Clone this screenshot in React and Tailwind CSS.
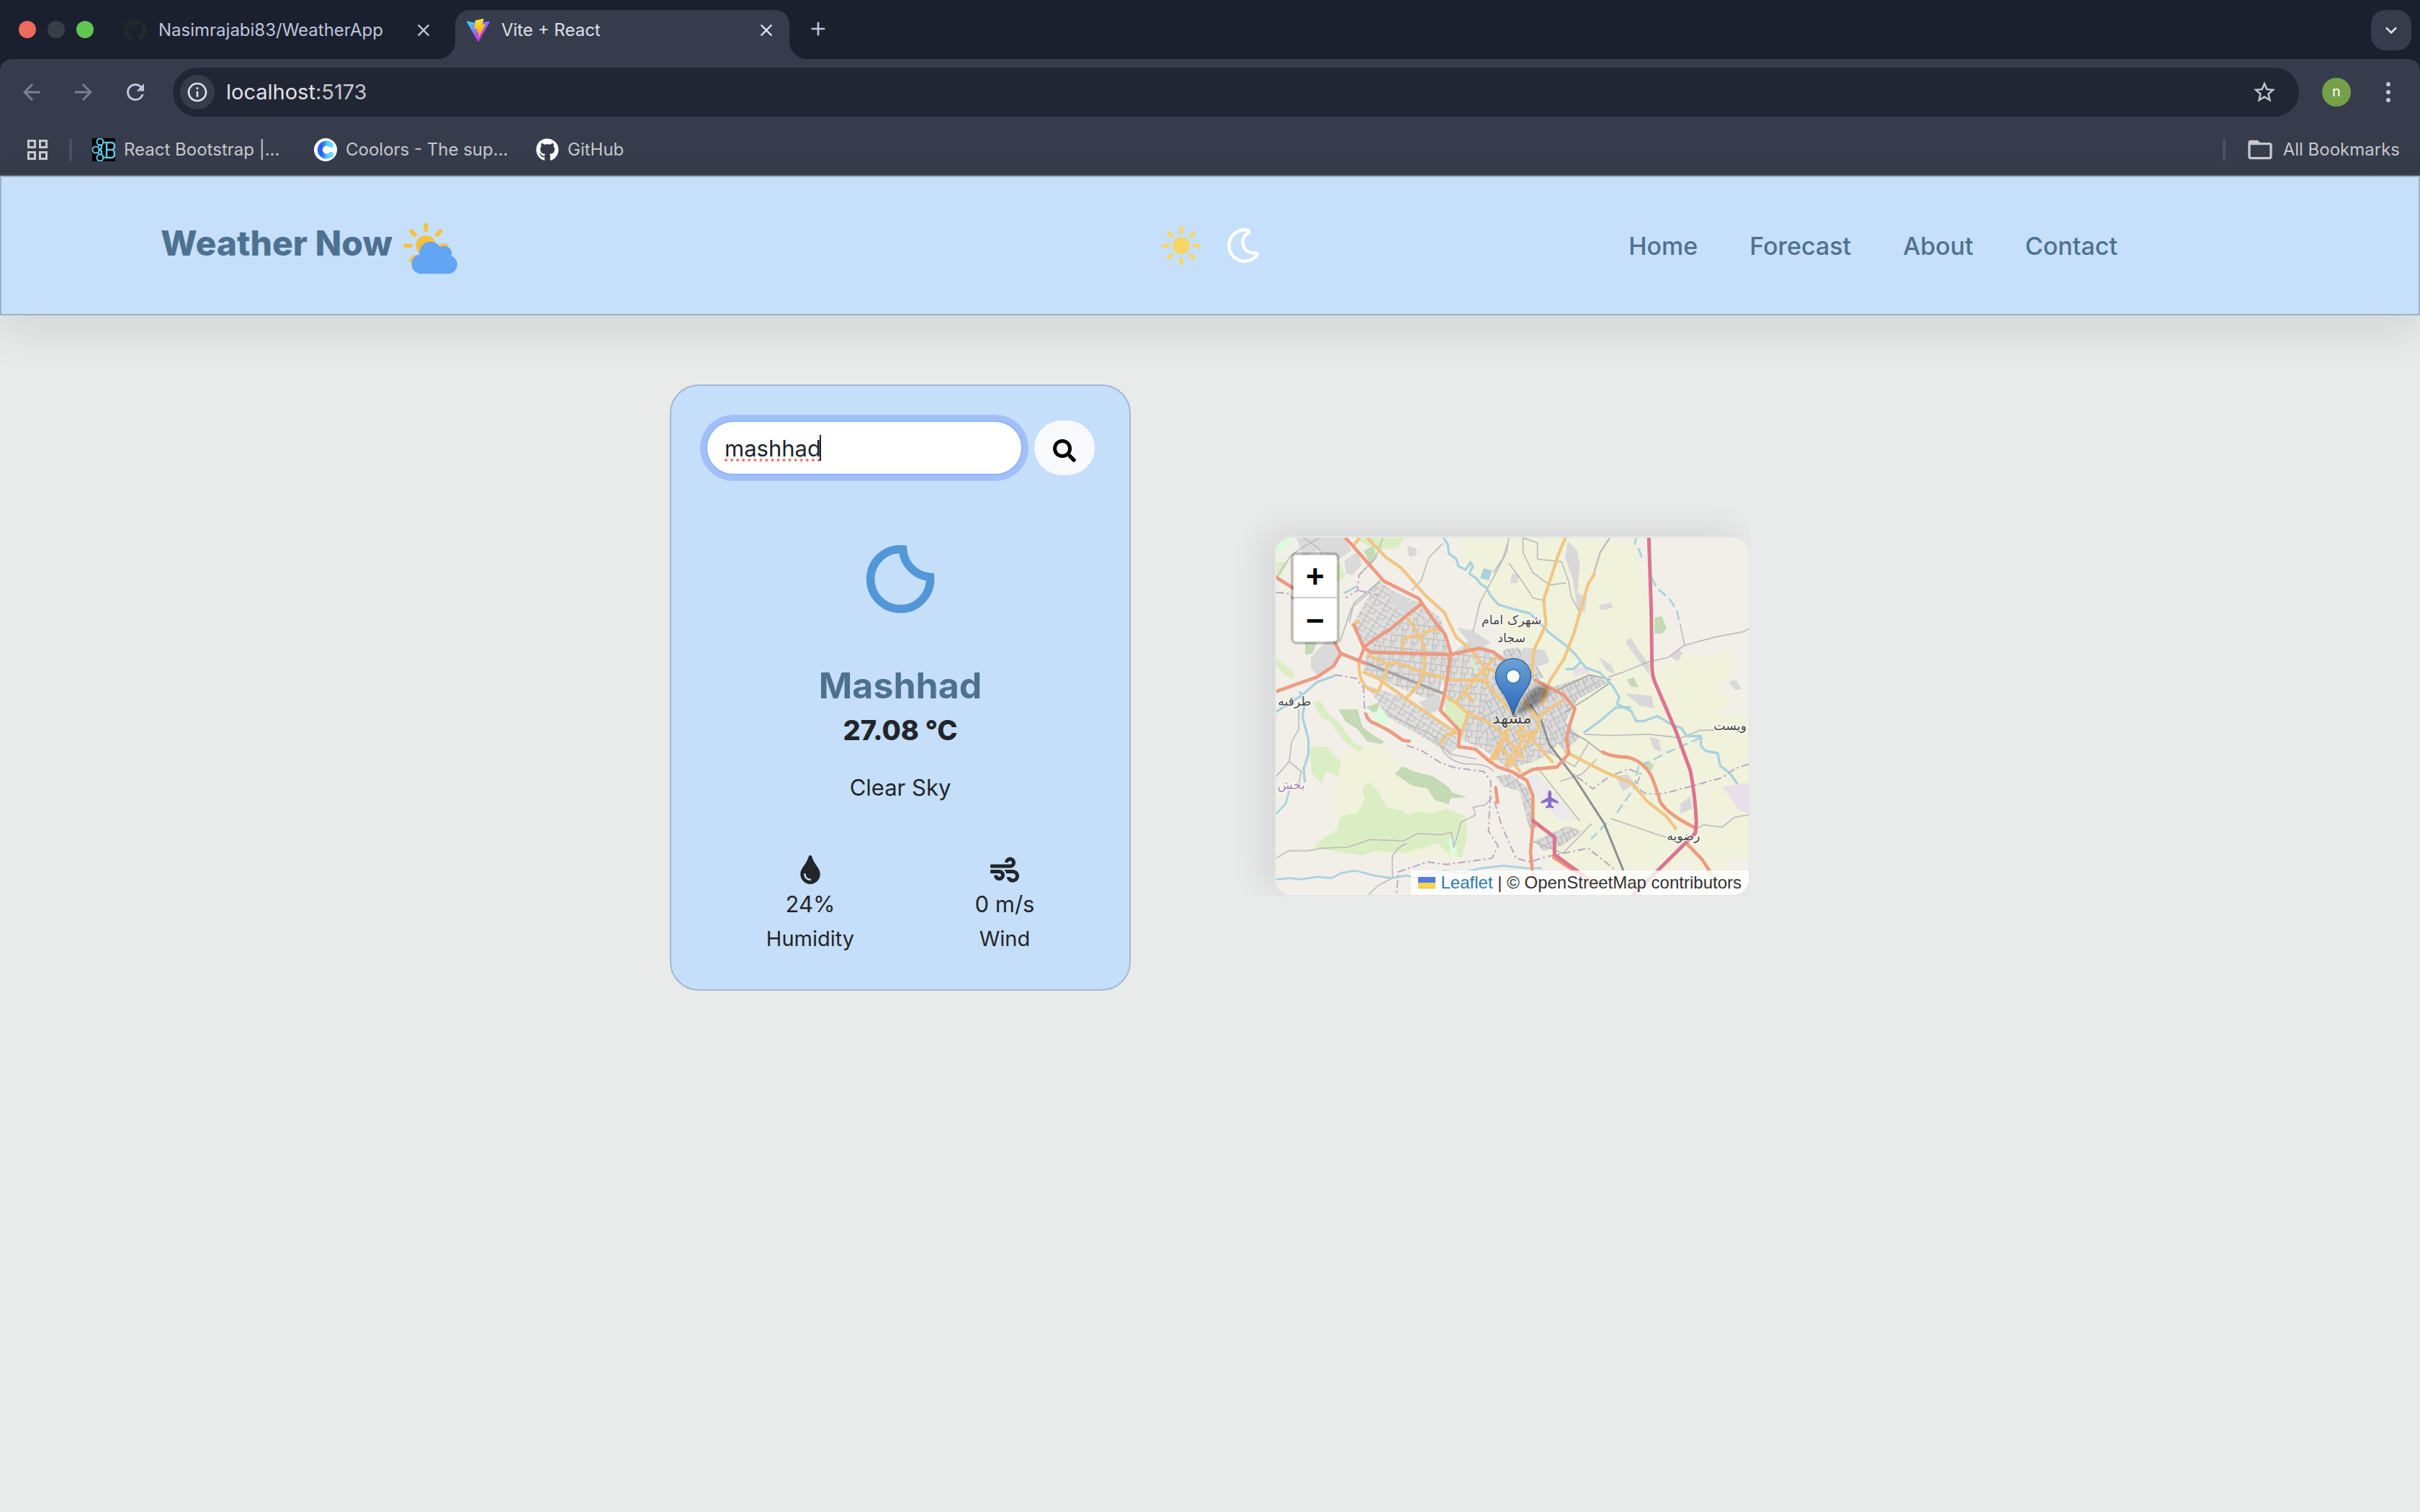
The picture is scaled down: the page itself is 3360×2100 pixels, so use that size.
import React from "react";
import { FaGithub, FaRegMoon, FaSearch, FaTint, FaWind } from "react-icons/fa";
import { IoSunny } from "react-icons/io5";
import {
  MdAdd,
  MdArrowBack,
  MdArrowForward,
  MdClose,
  MdFolderOpen,
  MdInfoOutline,
  MdKeyboardArrowDown,
  MdRefresh,
  MdStarBorder,
} from "react-icons/md";

function ViteLogo() {
  return (
    <svg viewBox="0 0 256 257" className="size-8 shrink-0" aria-hidden="true">
      <defs>
        <linearGradient id="viteBody" x1="-.8%" x2="57.6%" y1="7.7%" y2="78.4%">
          <stop offset="0%" stopColor="#41D1FF" />
          <stop offset="100%" stopColor="#BD34FE" />
        </linearGradient>
        <linearGradient id="viteBolt" x1="43.4%" x2="50.3%" y1="2.2%" y2="89%">
          <stop offset="0%" stopColor="#FFEA83" />
          <stop offset="8.3%" stopColor="#FFDD35" />
          <stop offset="100%" stopColor="#FFA800" />
        </linearGradient>
      </defs>
      <path
        fill="url(#viteBody)"
        d="M255.153 37.938L134.897 252.976c-2.483 4.44-8.862 4.466-11.382.048L.875 37.958c-2.746-4.814 1.371-10.646 6.827-9.67l120.385 21.517a6.537 6.537 0 0 0 2.322-.004l117.867-21.483c5.438-.991 9.574 4.796 6.877 9.62Z"
      />
      <path
        fill="url(#viteBolt)"
        d="M185.432.063L96.44 17.501a3.268 3.268 0 0 0-2.634 3.014l-5.474 92.456a3.268 3.268 0 0 0 3.997 3.378l24.777-5.718c2.318-.535 4.413 1.507 3.936 3.838l-7.361 36.047c-.495 2.426 1.782 4.5 4.151 3.78l15.304-4.649c2.372-.72 4.652 1.36 4.15 3.788l-11.698 56.621c-.732 3.542 3.979 5.473 5.943 2.437l1.313-2.028l72.516-144.72c1.215-2.423-.88-5.186-3.54-4.672l-25.505 4.922c-2.396.462-4.435-1.77-3.759-4.114l16.646-57.705c.677-2.35-1.37-4.583-3.769-4.113Z"
      />
    </svg>
  );
}

function ReactBootstrapLogo() {
  return (
    <svg viewBox="0 0 32 32" className="size-8 shrink-0" aria-hidden="true">
      <rect width="32" height="32" fill="#000" />
      <g fill="none" stroke="#5fcbe6" strokeWidth="2">
        <circle cx="11" cy="5" r="4.5" />
        <circle cx="5" cy="16" r="4.5" />
        <circle cx="11" cy="27" r="4.5" />
        <path d="M14 6l5 0M8 12l3-4M14 13l-4 3 4 3M8 20l3 3M14 26l5 1" />
        <path d="M20 6h7q4 0 4 5t-4 5h-7zM20 16h7q4 0 4 5.500t-4 5.500h-7z" strokeWidth="2.500" />
        <path d="M14 9q-4 7 0 14" />
      </g>
    </svg>
  );
}

function CoolorsLogo() {
  return (
    <svg viewBox="0 0 32 32" className="size-8 shrink-0" aria-hidden="true">
      <defs>
        <linearGradient id="coolors" x1="0" x2="1" y1="0" y2="0">
          <stop offset="0.25" stopColor="#2a62f0" />
          <stop offset="0.25" stopColor="#3183f4" />
          <stop offset="0.5" stopColor="#3d95f6" />
          <stop offset="0.5" stopColor="#4fb4f8" />
          <stop offset="1" stopColor="#66dcfb" />
        </linearGradient>
      </defs>
      <circle cx="16" cy="16" r="16" fill="#fff" />
      <path d="M23.500 9.500A9 9 0 1 0 23.500 22.500" fill="none" stroke="url(#coolors)" strokeWidth="7" strokeLinecap="round" />
    </svg>
  );
}

function Tab({ icon, title, active }) {
  return (
    <div
      className={
        active
          ? "relative h-17 w-[464px] rounded-t-[20px] bg-[#363c4b]"
          : "relative h-17 w-[464px]"
      }
    >
      {active && (
        <>
          <span className="absolute bottom-0 -left-6 size-6 bg-[radial-gradient(circle_at_0_0,transparent_24px,#363c4b_24px)]" />
          <span className="absolute bottom-0 -right-6 size-6 bg-[radial-gradient(circle_at_100%_0,transparent_24px,#363c4b_24px)]" />
        </>
      )}
      <div className={active ? "flex h-14 items-center gap-4 px-4 text-[#dfe0ea]" : "flex h-14 items-center gap-4 px-4 text-[#bfc5dc]"}>
        {icon}
        <span className="flex-1 truncate text-2xl">{title}</span>
        <button type="button" aria-label={`Close ${title}`} className="flex size-8 items-center justify-center">
          <MdClose className="size-7" />
        </button>
      </div>
    </div>
  );
}

function Bookmark({ icon, label, className }) {
  return (
    <a href="#bookmark" className={className}>
      {icon}
      <span className="truncate">{label}</span>
    </a>
  );
}

function BrowserChrome() {
  return (
    <div className="bg-[#1b202f] font-[Inter,sans-serif]">
      <div className="flex h-[82px] items-end gap-3 pr-3">
        <div className="flex h-[82px] w-36 items-center gap-4 pl-[26px]">
          <span className="size-6 shrink-0 rounded-full bg-[#ed6a5e]" />
          <span className="size-6 shrink-0 rounded-full bg-[#3a3e4b]" />
          <span className="size-6 shrink-0 rounded-full bg-[#61c554]" />
        </div>
        <Tab icon={<FaGithub className="size-8 shrink-0 text-[#24292e]" />} title="Nasimrajabi83/WeatherApp" />
        <Tab active icon={<ViteLogo />} title="Vite + React" />
        <button type="button" aria-label="New tab" className="mb-3.5 flex size-14 items-center justify-center text-[#bfc5dc]">
          <MdAdd className="size-8" />
        </button>
        <button
          type="button"
          aria-label="Search tabs"
          className="mb-3 ml-auto flex size-14 items-center justify-center rounded-[20px] bg-[#363c4b] text-[#dfe0ea]"
        >
          <MdKeyboardArrowDown className="size-8" />
        </button>
      </div>

      <div className="rounded-t-2xl border-b-2 border-[#48474d] bg-[#363c4b]">
        <div className="flex h-23 items-center gap-9 pl-[26px]">
          <button type="button" aria-label="Back" className="text-[#7c7f8d]">
            <MdArrowBack className="size-9" />
          </button>
          <button type="button" aria-label="Forward" className="text-[#7c7f8d]">
            <MdArrowForward className="size-9" />
          </button>
          <button type="button" aria-label="Reload" className="text-[#bfc5dc]">
            <MdRefresh className="size-9" />
          </button>
          <div className="-ml-0.5 flex h-17 flex-1 items-center rounded-full bg-[#212635] pr-[30px] pl-2.5">
            <span className="flex size-12 items-center justify-center rounded-full bg-[#363c4b] text-[#e3e2e6]">
              <MdInfoOutline className="size-8" />
            </span>
            <p className="flex-1 pl-4 text-[29px] text-[#c6c6ca]">
              <span className="text-[#e3e2e6]">localhost</span>:5173
            </p>
            <button type="button" aria-label="Bookmark this page" className="text-[#c7c7ce]">
              <MdStarBorder className="size-9" />
            </button>
          </div>
          <div className="-ml-1 flex items-center pr-[38px]">
            <span className="flex size-10 items-center justify-center rounded-full bg-[#759f49] pb-0.5 text-xl text-white">n</span>
            <button type="button" aria-label="Menu" className="ml-[46px] flex w-3 flex-col items-center gap-[5px]">
              <span className="size-1.5 rounded-full bg-[#bfc9de]" />
              <span className="size-1.5 rounded-full bg-[#bfc9de]" />
              <span className="size-1.5 rounded-full bg-[#bfc9de]" />
            </button>
          </div>
        </div>
        <div className="flex h-[68px] items-center pr-7 pl-[38px] text-2xl text-[#c7c7cd]">
          <button type="button" aria-label="Apps" className="grid grid-cols-2 gap-1">
            <span className="size-3 border-3 border-[#c7c7cd]" />
            <span className="size-3 border-3 border-[#c7c7cd]" />
            <span className="size-3 border-3 border-[#c7c7cd]" />
            <span className="size-3 border-3 border-[#c7c7cd]" />
          </button>
          <span className="ml-[30px] h-8 w-1 rounded-full bg-[#4b5162]" />
          <Bookmark className="ml-7 flex w-[308px] items-center gap-3" icon={<ReactBootstrapLogo />} label="React Bootstrap |..." />
          <Bookmark className="flex w-[308px] items-center gap-3" icon={<CoolorsLogo />} label="Coolors - The sup..." />
          <Bookmark className="flex items-center gap-3" icon={<FaGithub className="size-8 shrink-0 text-white" />} label="GitHub" />
          <span className="ml-auto h-8 w-1 rounded-full bg-[#4b5162]" />
          <Bookmark className="ml-7 flex items-center gap-3" icon={<MdFolderOpen className="size-10 shrink-0" />} label="All Bookmarks" />
        </div>
      </div>
    </div>
  );
}

function CloudSun() {
  return (
    <svg viewBox="1070 143 234 216" className="mt-2 h-18 w-[78px]" aria-hidden="true">
      <g stroke="#f4c242" strokeWidth="18" strokeLinecap="round">
        <path d="M1167 154v20M1082 240h19M1233 240h19M1107 180l13 14M1227 180l-13 14M1107 301l13-14" />
      </g>
      <circle cx="1167" cy="239" r="42" fill="#f4c242" />
      <path
        fill="#62a5f5"
        d="M1152 357a41 41 0 0 1-12-81a47 47 0 0 1 87-30a31 31 0 0 1 46 36a39 39 0 0 1-10 75z"
      />
    </svg>
  );
}

function NavBar() {
  return (
    <header className="grid h-[194px] grid-cols-[1fr_auto_1fr] items-center border-2 border-[#a0afc5] bg-[#c6dffb] text-[#4e7190] shadow-[0_20px_60px_rgba(0,0,0,0.1)]">
      <a href="#home" className="flex items-center gap-3.5 pl-[221px]">
        <span className="pb-1.5 text-5xl leading-none font-extrabold">Weather Now</span>
        <CloudSun />
      </a>
      <div className="flex items-center gap-8">
        <button type="button" aria-label="Light mode" className="text-[#f8d664]">
          <IoSunny className="size-15" />
        </button>
        <button type="button" aria-label="Dark mode" className="text-white">
          <FaRegMoon className="size-12" />
        </button>
      </div>
      <nav className="flex items-center justify-end gap-18 pr-[418px] text-[34px] font-medium">
        <a href="#home">Home</a>
        <a href="#forecast">Forecast</a>
        <a href="#about">About</a>
        <a href="#contact">Contact</a>
      </nav>
    </header>
  );
}

function Stat({ icon, value, label }) {
  return (
    <div className="flex flex-col items-center">
      {icon}
      <p className="mt-2.5 text-[31px] leading-9">{value}</p>
      <p className="mt-3.5 text-[29px] leading-8">{label}</p>
    </div>
  );
}

function WeatherCard() {
  return (
    <section className="w-[640px] rounded-[40px] border-2 border-[#a3b7d0] bg-[#c5defa] p-12 pb-[54px] text-[#212529]">
      <form className="flex gap-4">
        <div className="relative flex-1">
          <input
            aria-label="City"
            defaultValue="mashhad"
            spellCheck="false"
            className="h-19 w-full rounded-full border-2 border-[#8fb4f8] bg-white px-6 text-[31px] underline decoration-[#f0756b] decoration-dotted decoration-4 underline-offset-4 ring-8 ring-[#a1c0fa] outline-none"
          />
          <span className="absolute top-5 left-[158px] h-9 w-0.5 bg-[#212529]" />
        </div>
        <button type="button" aria-label="Search" className="flex h-19 w-21 items-center justify-center rounded-full bg-[#f8f9fb] pt-2 text-black">
          <FaSearch className="size-8" />
        </button>
      </form>

      <svg viewBox="1202 756 96 96" className="mx-auto mt-24 size-24" aria-hidden="true">
        <path
          d="M1253.500 763A41.500 41.500 0 1 0 1291.500 801.500C1271 800 1255 784 1253.500 763Z"
          fill="none"
          stroke="#5297d7"
          strokeWidth="11.500"
        />
      </svg>

      <h2 className="mt-17 text-center text-[50px] leading-16 font-bold text-[#4e7190]">Mashhad</h2>
      <p className="mt-1.5 text-center text-[38px] leading-12 font-extrabold">27.08 °C</p>
      <p className="mt-9 text-center text-[31px] leading-10">Clear Sky</p>

      <div className="mt-[74px] grid grid-cols-2 gap-5 pl-5">
        <Stat icon={<FaTint className="size-10" />} value="24%" label="Humidity" />
        <Stat icon={<FaWind className="size-10" />} value="0 m/s" label="Wind" />
      </div>
    </section>
  );
}

const MINOR = "#bdbdbd";
const PRIMARY = "#ec9b82";
const SECONDARY = "#f1c683";
const WATER = "#a9d2df";
const BORDER = "#bda7c0";

function MapDrawing() {
  return (
    <svg viewBox="0 0 1968 1488" className="block h-[496px] w-full" preserveAspectRatio="xMidYMid slice" role="img" aria-label="Map of Mashhad">
      <defs>
        <pattern id="streets" width="46" height="40" patternUnits="userSpaceOnUse" patternTransform="rotate(32)">
          <rect width="46" height="40" fill="#e0dfde" />
          <path d="M0 4h46M0 24h28M10 0v40M32 0v24" stroke="#bfbfbf" strokeWidth="4" fill="none" />
        </pattern>
        <pattern id="streetsB" width="44" height="50" patternUnits="userSpaceOnUse" patternTransform="rotate(6)">
          <rect width="44" height="50" fill="#dfdedd" />
          <path d="M0 6h44M0 30h30M6 0v50M28 6v24M18 30v26" stroke="#bebebe" strokeWidth="4" fill="none" />
        </pattern>
        <pattern id="streetsC" width="36" height="48" patternUnits="userSpaceOnUse" patternTransform="rotate(-28)">
          <rect width="36" height="48" fill="#dbdada" />
          <path d="M0 6h36M0 30h22M6 0v48M22 6v24" stroke="#b9b9b9" strokeWidth="4" fill="none" />
        </pattern>
        <linearGradient id="pin" x1="0" x2="0" y1="0" y2="1">
          <stop offset="0" stopColor="#6aa3d5" />
          <stop offset="1" stopColor="#2c66bd" />
        </linearGradient>
        <filter id="soft" x="-50%" y="-50%" width="200%" height="200%">
          <feGaussianBlur stdDeviation="9" />
        </filter>
      </defs>

      <rect width="1968" height="1488" fill="#f2efe9" />

      <g transform="scale(1 1.0333) translate(-96 -78)">
        {/* Farmland */}
        <g fill="#f0f2dc">
          <path d="M860 78h340l180 0 60 10 120 0 60 120 10 220 20 100 90 180 130 170 60 160 30 200 10 130 60 160 -120 -10 -110 -150 -60 100 -180 0 -220 -60 -100 0 -60 -150 -60 -200 20 -200 60 -260 -180 -160 -90 -180 -60 -80z" />
          <path d="M1590 78l60 280 20 260 70 180 130 -20 190 20v420l-120 -20 -260 20 -60 300h-240l-120 -200 60 -240 -70 -400 60 -360z" />
          <path d="M1690 620l100 -80 60 20 140 -30 10 90 -60 60 60 60 -90 60 -120 0 -80 -60z" />
          <path d="M370 940l180 -30 70 110 180 120 20 80 -60 80 -200 60 -180 -40 -40 -160z" />
          <path d="M620 1330l130 -60 100 60 10 50 -100 -20 -90 10z" />
          <path d="M1930 1230l134 -30v180q-80 0 -134 -60z" />
          <path d="M1240 1180l300 60 80 160 -40 118h-180z" />
        </g>
        <path d="M1650 78h414v400l-200 20 -130 50 -60 -100z" fill="#f2efe9" />

        {/* Grass, scrub and woods */}
        <g fill="#dbeec3">
          <path d="M420 78h210l-30 40 -90 10zM96 175l50 0 -30 60 -20 10zM300 200l60 -20 25 50 -30 25zM96 560l70 60 0 30 -40 -20 -30 -40z" />
          <path d="M255 1330q20 -40 90 -70l20 -60 70 -10 30 -60 -10 -40 30 -25 40 40 30 60 60 10 30 20 40 -15 60 10 60 -20 80 30 5 80 -20 90 -60 -20 -40 -40 -140 40 -120 -10 -60 20 -120 -20z" />
          <path d="M250 740l30 -5 40 60 40 30 60 80 40 20 -20 15 -60 -40 -60 -80 -40 -20zM235 920l70 0 60 60 -10 60 -50 -20 -20 50 -40 -40z" />
        </g>
        <g fill="#c3dab5">
          <path d="M590 1030l30 -30 50 20 80 20 60 40 20 25 60 18 -70 5 -5 25 -60 -20 -30 -45 -60 -10z" />
          <path d="M355 770l80 0 20 70 40 30 50 30 -10 10 -60 -10 -40 -50 -50 -30zM470 760l60 -20 -20 50z" />
          <path d="M460 130l40 -20 15 50 -30 20zM216 500h50l-20 45 -30 5z" />
          <path d="M1672 400l30 -6 20 50 -20 20 -30 0zM1100 1075l30 0 10 40zM1555 650l30 -10 20 40 -30 0zM1630 980l40 10 -10 25 -30 0z" />
        </g>
        <path d="M96 78h80l-50 50 -30 10zM500 780l50 -5 20 40 -30 25 -40 -30zM660 880l20 0 -10 30zM815 1290l30 0 5 70 -30 0z" fill="#dcfadc" />
        <path d="M1330 600l60 0 10 20 -60 15zM1955 1080l109 -15v130l-40 -20 -30 -40z" fill="#e9dfeb" />

        {/* Built-up areas */}
        <path d="M180 78h200l30 50 -60 40 -80 -40 -60 30zM380 170l60 -40 10 60 -40 40 -25 -10zM240 560l60 -60 50 -10 10 50 -30 60 -60 40 -30 -40z" fill="#dadada" />
        <path d="M410 430l110 -180 60 40 110 50 90 60 40 130 -340 0 -30 -20z" fill="url(#streets)" />
        <path d="M470 530l60 -30 140 -100 110 30 40 130 -60 180 -180 -70 -120 -60z" fill="url(#streetsB)" />
        <path d="M470 670l180 60 180 120 30 60 -40 40 -100 -60 -160 -90z" fill="url(#streets)" />
        <path d="M830 540l80 -50 120 60 100 0 40 100 120 60 20 60 -20 90 -40 80 -80 40 -110 30 -100 -80 -100 -40 -60 -110 -10 -160z" fill="url(#streetsB)" />
        <path d="M1000 620l160 10 40 130 -40 180 -120 20 -100 -130z" fill="url(#streetsC)" />
        <path d="M1040 530l60 -10 60 40 50 80 -60 30 -100 -60zM1240 680l170 -50 70 30 -130 70 -50 90 60 60 -60 60 -80 -80z" fill="url(#streetsC)" />
        <path d="M1010 1040l60 -10 80 60 30 160 -30 0 -40 -150 -70 -20zM1170 1300l140 -60 60 20 -80 60 -80 20z" fill="url(#streetsC)" />
        <path d="M800 730l50 20 40 40 -30 70 -60 -70zM900 570l20 0 20 50 -10 10z" fill="#dbeec3" />
        <g fill="#d8d8d8">
          <path d="M560 290l60 20 60 40 -10 40 -70 -20zM690 740l90 -30 0 60 -50 20zM640 110l40 10 0 30 -30 5zM850 440l60 10 80 50 -60 40zM1125 520l90 10 20 50 -60 20 -60 -40z" />
          <path d="M1310 90l40 40 10 60 -10 110 40 20 -10 60 -30 -20 -20 -120 -30 -80zM1550 500l20 -20 80 110 0 40zM1550 705l110 10 10 50 -60 -10zM1440 560l50 30 20 40 -40 -20zM1440 350l50 -10 10 20 -50 10zM1080 220l30 10 -10 30 -30 0z" />
          <path d="M1510 1040l50 -10 30 40 -50 30zM1780 1150l40 -30 10 50 -50 20zM1980 660l30 -10 25 40 -30 0zM1650 880l40 10 10 50 -30 -10zM1740 560l30 -30 20 10 -20 35z" />
        </g>
        <path d="M1140 1040l40 -10 120 130 40 50 -60 10 -90 -80z" fill="#ebe9ec" />

        {/* Minor roads */}
        <g fill="none" stroke={MINOR} strokeWidth="5" strokeLinejoin="round">
          <path d="M96 240l60 -90 60 -40 60 -32M210 78l60 40 50 80M400 420l20 -80 110 -90 -60 60 -60 50 -50 140" />
          <path d="M1065 78l-10 60 -60 110 -50 90 -30 120M1124 78v60l40 80 70 50 70 -8M1065 180l60 80 40 60 50 12M1060 100l-20 60 -40 60M1124 78l60 20 0 66 100 10 30 80 10 60 40 70" />
          <path d="M1485 78l-40 60 -25 80" strokeWidth="7" />
          <path d="M540 78l-30 80 -60 60M790 100l-60 60 -30 90 -40 40" />
          <path d="M96 1370l50 -30 80 0 60 -10 110 -5 60 -20 30 -10 140 5 60 -30 100 5 40 -10 10 60 30 -100 60 -30 -10 -30 50 -10 30 -30" />
          <path d="M640 1310q-70 30 -60 80v60l-60 30 -40 38M190 770v80l-30 50 -10 80 50 40 -10 50M150 980l-54 60" />
          <path d="M1480 640l60 -20 100 -40 90 -20 60 -45 60 -18 80 -20 110 -20 24 -12M1798 515l-20 -90" />
          <path d="M1380 870l110 5 160 -5 130 15 80 -30 60 -2M1490 1210l60 20 120 40 50 15M2064 1195l-60 10 -50 40 -80 -10 -40 25" />
          <path d="M780 920q40 70 120 70t100 30M560 790l180 80 80 80 110 20M1230 940l110 60 60 -100M1280 1060l90 -30 60 -60M1180 1000l180 220M1160 1300l130 50 120 -120" />
          <path d="M1250 700l150 -70 90 20M1300 780l100 -60 90 -60M1320 860l60 30 80 60" stroke="#a9a9a9" />
        </g>

        {/* Rivers */}
        <g fill="none" stroke={WATER} strokeWidth="10" strokeLinejoin="round" strokeLinecap="round">
          <path d="M795 82l15 20 5 40 30 20 10 30 30 15 20 -30 10 15 -15 30 30 20 20 25 20 10 20 35 30 35 70 20 60 15 25 20 60 60 80 60 30 30 40 50 60 20 50 50 30 50 -10 25 60 30 20 40 30 0 60 -20 50 30 50 20 20 30 60 0 0 40 20 20 50 10 10 50 40 30 30 40" />
          <path d="M1305 607h30l30 -30M1380 862l70 -50 60 -50 60 0M96 780l110 -70 60 -50 70 -25M195 700l20 40 -10 60 25 90 0 60 -20 60 5 50" />
          <path d="M380 300l50 -25M150 1100l-15 50 -39 40M96 1455l60 -5 40 5 70 -10 60 5 40 -20 60 -10 80 20 70 10 60 -10 60 10M700 1440l100 -20 60 10 90 -20 90 -10 100 10 60 0" strokeWidth="8" />
          <path d="M1595 82l-5 20M1605 122l20 50M1660 240l20 40 50 40 35 50 10 50M1860 885l-90 40 -50 20 -80 40 -30 10M1605 1000l-20 90 -80 110M1470 1230l-60 60" strokeWidth="8" strokeDasharray="34 24" />
        </g>
        <path d="M960 200l35 10 -15 40 -35 -10z" fill={WATER} />

        {/* Administrative borders */}
        <g fill="none" stroke={BORDER} strokeWidth="6" strokeDasharray="32 12 8 12">
          <path d="M96 298l50 5 30 30M500 170l-60 60 -5 60 -50 30M440 290l80 20M340 630l90 15 30 40 5 110 30 30M640 915l60 20 80 50 60 20 120 15 30 40 -10 200 40 60 -25 50 -190 25 -80 -10 -120 40 -10 110" />
          <path d="M1005 1140l30 100 60 130 60 15 60 -20 180 -35 130 100M2064 990l-60 20 -50 35 -150 40 -100 25 -70 0 -40 -30 20 -50 -50 -20 -80 30 -70 50 -80 -60" />
        </g>

        {/* Railways */}
        <path d="M1152 750l50 70 30 90 110 140 120 180 80 190" fill="none" stroke="#8f8f8f" strokeWidth="9" />
        <path d="M370 545l420 160" fill="none" stroke="#a6a29f" strokeWidth="11" />

        {/* Secondary roads */}
        <g fill="none" stroke={SECONDARY} strokeWidth="13" strokeLinejoin="round" strokeLinecap="round">
          <path d="M475 78l80 80 60 40 100 110 80 70 50 100 60 50 50 60 20 60 0 20M440 82l-20 25M1300 78l-30 70 -60 180 10 100 -50 100 -10 100M1420 225l-25 40 -60 200 -40 100 -60 90 -30 90M1200 750l15 -60" />
          <path d="M480 552l80 35 40 -5 110 40 120 30h120M440 580q0 60 20 85 10 25 60 35l30 -70 10 -40M460 620l60 25 130 90 120 80 80 50M635 725q70 -60 75 -110l5 -80 -20 -60 -50 -70M622 530v-40q10 -15 70 -15l40 -22 40 -6" />
          <path d="M960 655l120 130M1010 560l-80 80 -85 100M880 700l35 35M805 715l90 70 90 40 60 50 80 90M895 785l-30 90M780 910l25 -40 45 -5M970 600l60 30M1085 800l-100 180M1060 850l-50 120M1180 860l-120 140M1040 930l70 90M1285 735l-90 60 -10 60 -50 20 -80 110M1130 740l60 70M1125 850l120 130M990 980l70 -110" />
          <path d="M1300 940l160 80 120 50 60 70 80 60 40 50M1160 800l-60 60 10 20 40 -10" />
          <path d="M415 430l25 -15" />
        </g>

        {/* Primary roads */}
        <g fill="none" stroke={PRIMARY} strokeWidth="14" strokeLinejoin="round" strokeLinecap="round">
          <path d="M385 78l160 175 145 70 60 85 50 60 25 80 115 -25 60 15 60 45M700 345l-60 45 -60 50 -80 50 -40 30 -40 -90M462 522l-18 45M462 522l30 17 330 10M820 560l-15 110 -25 105 80 80 -5 65 70 10 60 50 35 22 60 20 60 35 25 60 0 110 -10 120 10 100" />
          <path d="M96 238l75 45M340 500l25 45 -30 50 -70 45 -85 28 -85 30M365 545l100 38M470 790q10 30 35 35l60 30 60 40 25 3M1010 1085l8 60" />
          <path d="M1175 652l120 60 45 55 -20 60 -15 60 10 60 -50 55 -100 10 -60 30M1455 942q40 20 100 20 60 10 100 70 20 40 40 110 30 50 145 105M1810 1315l60 60 40 60" />
          <path d="M1255 1365l180 115" strokeWidth="20" />
        </g>

        {/* Motorway */}
        <g fill="none" stroke="#dc7490" strokeWidth="15" strokeLinejoin="round">
          <path d="M1648 78l10 300 3 220q0 40 20 80l80 180 60 160q20 100 25 210l-4 40 -30 30 -230 220" />
          <path d="M1160 1215l95 70v70l120 85" />
        </g>

        {/* Airport */}
        <path
          fill="#8a6cc8"
          d="M1235 1097q7 0 7 12v16l29 16v8l-29 -8v14l10 8v6l-17 -4 -17 4v-6l10 -8v-14l-29 8v-8l29 -16v-16q0 -12 7 -12z"
        />
      </g>

      {/* Place names */}
      <g
        fontFamily="DejaVu Sans, sans-serif"
        fill="#444"
        stroke="#fff"
        strokeOpacity=".75"
        strokeWidth="8"
        paintOrder="stroke"
        textAnchor="middle"
        fontSize="52"
        direction="rtl"
      >
        <text x="980" y="360">شهرک امام</text>
        <text x="980" y="436">سجاد</text>
        <text x="76" y="700">طرقبه</text>
        <text x="1696" y="1260">رضویه</text>
        <text x="1890" y="802">ویست</text>
        <text x="62" y="1046" fill="#a886b2">بخش</text>
        <text x="982" y="774" fontSize="68">مشهد</text>
      </g>

      {/* Marker */}
      <path d="M990 740l50 -80q50 -60 84 -40t-24 66q-50 40 -110 54z" fill="#000" opacity=".38" filter="url(#soft)" />
      <path d="M987 740q-20 -62 -50 -104 -24 -34 -24 -60a74 73 0 0 1 148 0q0 26 -24 60 -30 42 -50 104z" fill="url(#pin)" stroke="#2d6396" strokeWidth="4" />
      <circle cx="987" cy="577" r="31" fill="#3b78b6" />
      <circle cx="987" cy="577" r="26" fill="#fff" />
    </svg>
  );
}

function MapPanel() {
  return (
    <section className="w-[720px] overflow-hidden pt-20 pl-15">
      <div className="relative overflow-hidden rounded-3xl border-2 border-[#e6e8e7] shadow-[-16px_-8px_48px_rgba(0,0,0,0.09)]">
        <MapDrawing />
        <div className="absolute top-5 left-5 flex flex-col overflow-hidden rounded-lg border-4 border-black/20 bg-clip-padding font-['Liberation_Mono',monospace] text-[44px] leading-none font-bold text-black">
          <button type="button" aria-label="Zoom in" className="h-15 w-15 border-b-2 border-[#ccc] bg-white pt-2">
            +
          </button>
          <button type="button" aria-label="Zoom out" className="h-15 w-15 bg-white pt-2">
            −
          </button>
        </div>
        <div className="absolute right-0 bottom-0 flex h-[34px] items-center bg-white/80 px-2.5 font-['Liberation_Sans',Arial,sans-serif] text-2xl text-[#333]">
          <a href="#leaflet" className="flex items-center gap-2 text-[#2f7bab]">
            <svg viewBox="0 0 24 16" className="h-4 w-6" aria-hidden="true">
              <path fill="#557be0" d="M0 0h24v8H0z" />
              <path fill="#f8d648" d="M0 8h24v8H0z" />
              <path fill="#dcb93a" d="M0 15h24v1H0z" />
            </svg>
            Leaflet
          </a>
          <span className="whitespace-pre"> | © OpenStreetMap contributors</span>
        </div>
      </div>
    </section>
  );
}

export default function App() {
  return (
    <div className="min-h-screen bg-[#e8ebea] font-[Inter,sans-serif]">
      <BrowserChrome />
      <NavBar />
      <main className="mx-auto flex max-w-[1500px] items-center justify-between pt-24">
        <WeatherCard />
        <MapPanel />
      </main>
    </div>
  );
}
